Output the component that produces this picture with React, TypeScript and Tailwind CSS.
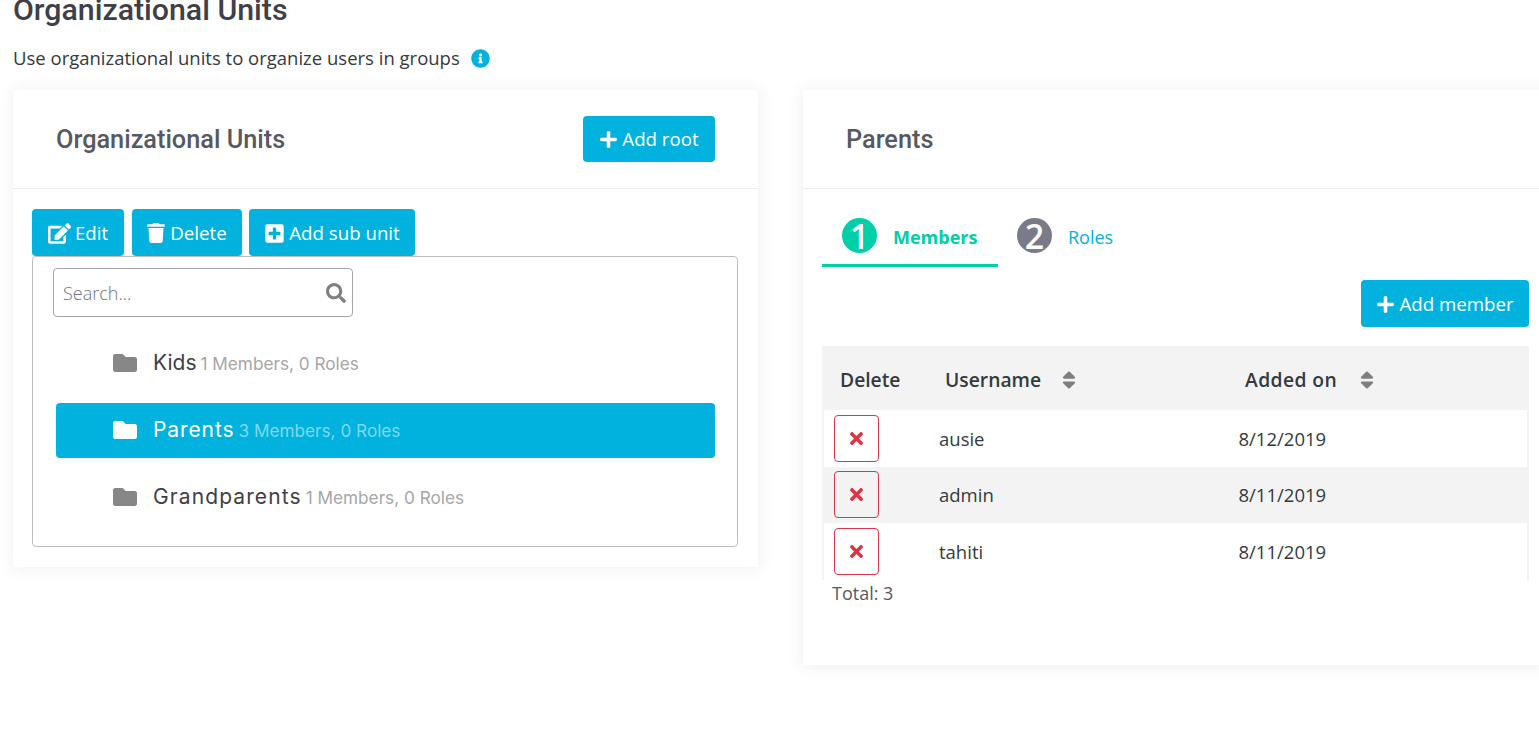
import { FaPlus, FaEdit, FaTrash, FaPlusSquare, FaSearch, FaFolder, FaTimes, FaSort, FaInfoCircle } from "react-icons/fa";

const noto = "font-['Open_Sans','Noto_Sans',sans-serif]";
const btn = "flex items-center justify-center rounded-[4px] bg-[#00b2dd] text-white text-[18.7px]";

function TreeRow({ name, info, active, track }: { name: string; info: string; active?: boolean; track: string }) {
  return (
    <div className={`flex h-[55px] items-center rounded-[4px] pb-[1px] pl-[57px] ${active ? "bg-[#00b2dd] text-white" : "text-[#3f4047]"}`}>
      <FaFolder className={`mr-[16px] h-[24px] w-[24px] ${active ? "text-white" : "text-[#878787]"}`} />
      <span className={`text-[21px] ${track}`}>{name}</span>
      <span className={`ml-[4px] mt-[2px] text-[17.2px] ${active ? "text-[#7fd8ee]" : "text-[#a6a6a6]"}`}>{info}</span>
    </div>
  );
}

function Row({ name, date, shaded }: { name: string; date: string; shaded?: boolean }) {
  return (
    <div className={`flex h-[56.5px] items-center ${shaded ? "bg-[#f3f3f3]" : "bg-white"}`}>
      <div className="ml-[10px] flex h-[47px] w-[45px] items-center justify-center rounded-[4px] border border-[#dc3545]">
        <FaTimes className="h-[19px] w-[19px] text-[#dc3545]" />
      </div>
      <span className="ml-[60px] mt-[1px] w-[299.5px] text-[18.5px] text-[#343a40]">{name}</span>
      <span className="mt-[1px] text-[18.5px] text-[#343a40]">{date}</span>
    </div>
  );
}

export default function App() {
  return (
    <div className={`h-[750px] w-[1539px] overflow-hidden bg-white pl-[13px] ${noto}`}>
      <h1 className="-mt-[9px] font-['Roboto',sans-serif] text-[30.3px] font-medium leading-[38px] text-[#3f4047]">Organizational Units</h1>
      <div className="mt-[10px] flex h-[38px] items-center text-[18.5px] text-[#343a40]">
        <span>Use organizational units to organize users in groups</span>
        <FaInfoCircle className="ml-[11px] h-[19px] w-[19px] text-[#00b2dd]" />
      </div>
      <div className="mt-[13px] flex w-[1580px] items-start gap-[45px]">
        <div className="h-[477px] w-[745px] shrink-0 bg-white shadow-[0_1px_15px_1px_rgba(69,65,78,0.08)]">
          <div className="flex h-[99px] items-center justify-between border-b border-[#ebedf2] pl-[43px] pr-[43px]">
            <span className="mt-[2px] font-['Roboto',sans-serif] text-[25.3px] font-medium text-[#575962]">Organizational Units</span>
            <button className={`${btn} h-[46px] w-[132px] gap-[4px]`}><FaPlus className="h-[19px] w-[19px]" />Add root</button>
          </div>
          <div className="px-[19px] pt-[20px]">
            <div className="flex gap-[8px]">
              <button className={`${btn} h-[47px] w-[92px] gap-[4px] pt-[1px]`}><FaEdit className="h-[23px] w-[23px]" />Edit</button>
              <button className={`${btn} h-[47px] w-[110px] gap-[5px] pt-[1px]`}><FaTrash className="h-[20px] w-[18px]" />Delete</button>
              <button className={`${btn} ml-[-1px] h-[47px] w-[166px] gap-[4px] pt-[1px]`}><FaPlusSquare className="h-[21px] w-[21px]" />Add sub unit</button>
            </div>
            <div className="h-[291px] w-[706px] rounded-[4px] border border-[#bdbdbd] px-[20px] pt-[11px]">
              <div className="flex h-[49px] w-[300px] items-center justify-between rounded-[4px] border border-[#a6a6a6] pl-[9px] pr-[6px]">
                <span className="mt-[1px] text-[18px] font-light text-[#6c757d]">Search...</span>
                <FaSearch className="h-[20px] w-[20px] text-[#7f7f7f]" />
              </div>
              <div className="ml-[3px] mt-[19px] flex w-[659px] flex-col gap-[12px] font-['Inter','Lato',sans-serif]">
                <TreeRow name="Kids" info="1 Members, 0 Roles" track="tracking-[0px]" />
                <TreeRow name="Parents" info="3 Members, 0 Roles" active track="tracking-[0.9px]" />
                <TreeRow name="Grandparents" info="1 Members, 0 Roles" track="tracking-[1.1px]" />
              </div>
            </div>
          </div>
        </div>
        <div className="h-[575px] w-[745px] shrink-0 bg-white shadow-[0_1px_15px_1px_rgba(69,65,78,0.08)]">
          <div className="flex h-[99px] items-center border-b border-[#ebedf2] pl-[43px]">
            <span className="mt-[2px] font-['Roboto',sans-serif] text-[25.3px] font-medium text-[#575962]">Parents</span>
          </div>
          <div className="px-[19px] pt-[29px]">
            <div className="flex h-[49px]">
              <div className="flex h-[49px] w-[176px] items-start border-b-[3px] border-[#00cfa8] pl-[20px]">
                <span className="flex h-[35px] w-[35px] items-center justify-center rounded-full bg-[#00cfa8] text-[34px] font-semibold leading-none text-white">1</span>
                <span className="ml-[16px] mt-[7px] text-[18px] font-bold leading-[24px] text-[#00cfa8]">Members</span>
              </div>
              <div className="flex items-start pl-[19px]">
                <span className="flex h-[35px] w-[35px] items-center justify-center rounded-full bg-[#7a7b88] text-[34px] font-semibold leading-none text-white">2</span>
                <span className="ml-[16px] mt-[7px] text-[18px] leading-[24px] text-[#00b2dd]">Roles</span>
              </div>
            </div>
            <div className="mt-[13px] flex w-[707px] justify-end">
              <button className={`${btn} h-[47px] w-[168px] gap-[4px] pt-[1px]`}><FaPlus className="h-[19px] w-[19px]" />Add member</button>
            </div>
            <div className="mt-[19px] w-[707px] bg-[#f3f3f3] px-[2px]">
              <div className="flex h-[64px] items-center pt-[4px] text-[19.3px] font-semibold text-[#343a40]">
                <span className="ml-[16px] w-[105px]">Delete</span>
                <span className="w-[117px]">Username</span>
                <FaSort className="h-[22px] w-[14px] text-[#7f7f7f]" />
                <span className="ml-[169px] w-[115px] tracking-[0.4px]">Added on</span>
                <FaSort className="h-[22px] w-[14px] text-[#7f7f7f]" />
              </div>
              <Row name="ausie" date="8/12/2019" />
              <Row name="admin" date="8/11/2019" shaded />
              <Row name="tahiti" date="8/11/2019" />
            </div>
            <div className="ml-[10px] mt-[1px] text-[18px] leading-[24px] text-[#575962]">Total: 3</div>
          </div>
        </div>
      </div>
    </div>
  );
}
